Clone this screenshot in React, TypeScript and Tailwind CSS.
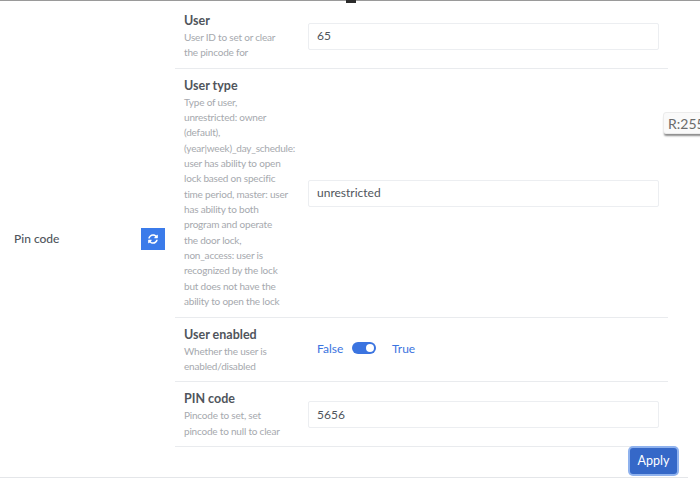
import React from 'react';
import { FaSyncAlt } from 'react-icons/fa';

const font = { fontFamily: 'Lato, "Open Sans", sans-serif' };

const Field: React.FC<{ title: string; lines: string[]; children: React.ReactNode }> = ({ title, lines, children }) => (
  <div className="flex items-center border-b border-[#e9ebee] pl-[9px]">
    <div className="w-[124px] shrink-0 pt-[8px] pb-[7px]">
      <div className="text-[12.5px] leading-[18px] font-bold text-[#50555c]">{title}</div>
      {lines.map((line) => (
        <div key={line} className="text-[10px] leading-[15.35px] tracking-[-0.2px] whitespace-nowrap text-[#a6a9ae]">{line}</div>
      ))}
    </div>
    {children}
  </div>
);

const TextInput: React.FC<{ value: string }> = ({ value }) => (
  <div className="mt-px flex h-[27px] w-[351px] items-center rounded-[2px] border border-[#eceef1] bg-white pl-[8px] text-[12px] text-[#50555c]">
    {value}
  </div>
);

export default function App() {
  return (
    <div style={font} className="relative h-[485px] w-[700px] overflow-hidden bg-white">
      <div className="h-px bg-[#9a9a9a]" />
      <div className="absolute left-[346px] top-0 h-[3px] w-[10px] bg-[#2b2b2b]" />

      <div className="flex h-[477px] w-[688px] items-center border-b border-[#e4e6e9]">
        {/* Group label */}
        <div className="flex w-[175px] shrink-0 items-center justify-between pl-[14px] pr-[10px]">
          <span className="text-[12px] font-medium text-[#50555c]">Pin code</span>
          <button className="flex h-[22px] w-[24px] items-center justify-center bg-[#3b7bea] text-white">
            <FaSyncAlt size={10} />
          </button>
        </div>

        {/* Fields */}
        <div className="w-[493px] self-start pt-[3px]">
          <Field title="User" lines={['User ID to set or clear', 'the pincode for']}>
            <TextInput value="65" />
          </Field>
          <Field
            title="User type"
            lines={[
              'Type of user,',
              'unrestricted: owner',
              '(default),',
              '(year|week)_day_schedule:',
              'user has ability to open',
              'lock based on specific',
              'time period, master: user',
              'has ability to both',
              'program and operate',
              'the door lock,',
              'non_access: user is',
              'recognized by the lock',
              'but does not have the',
              'ability to open the lock',
            ]}
          >
            <TextInput value="unrestricted" />
          </Field>
          <Field title="User enabled" lines={['Whether the user is', 'enabled/disabled']}>
            <div className="flex items-center pl-[9px] text-[12px] text-[#3b74e0]">
              <span className="w-[35px]">False</span>
              <span className="mb-[3px] flex h-[12px] w-[24px] items-center justify-end rounded-full bg-[#3b74e0] pr-[2px]">
                <span className="h-[8px] w-[8px] rounded-full bg-white" />
              </span>
              <span className="ml-[16px]">True</span>
            </div>
          </Field>
          <Field title="PIN code" lines={['Pincode to set, set', 'pincode to null to clear']}>
            <TextInput value="5656" />
          </Field>
        </div>
      </div>

      <button className="absolute left-[630px] top-[448px] h-[26px] w-[47px] rounded-[3px] bg-[#3568c8] text-[12.5px] text-white ring-2 ring-[#8fb2ee]">
        Apply
      </button>

      <div className="absolute left-[663px] top-[112px] flex h-[22px] w-[60px] items-center rounded-[3px] border border-[#ececec] bg-[#fafafa] pl-[4px] text-[14px] text-[#6b6b6b] shadow-[0_3px_2px_-1px_rgba(0,0,0,0.45)]">
        R:255
      </div>
    </div>
  );
}
